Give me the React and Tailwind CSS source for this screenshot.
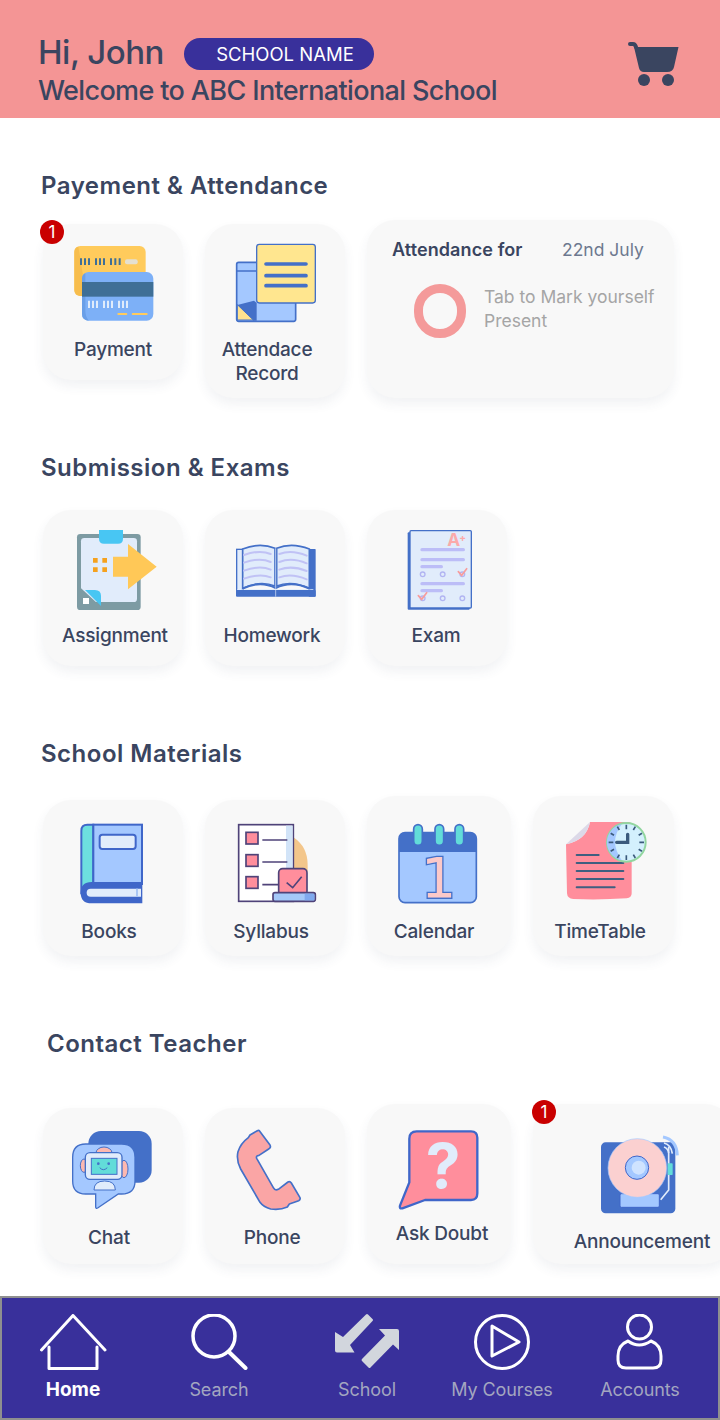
import React from 'react'

const BLUE = '#4470c8'
const PALE = '#e1ecfb'
const SKY = '#a4c8ff'
const PINK = '#ff8e9c'
const TEAL = '#62dcd9'

function Badge({ className }) {
  return (
    <span className={`absolute w-[24px] h-[24px] rounded-full bg-[#c90000] text-white text-[17px] leading-[24px] text-center ${className}`}>1</span>
  )
}

function Tile({ box, iconBox, labelBox, icon, label, badge }) {
  return (
    <div className={`relative shrink-0 flex flex-col items-start bg-[#f8f8f8] rounded-[28px] shadow-[0_6px_12px_rgba(60,70,100,0.07)] ${box}`}>
      {badge}
      <div className={`shrink-0 ${iconBox}`}>{icon}</div>
      <div className={`w-full text-center whitespace-pre-line text-[19px] leading-[24px] tracking-[-0.2px] font-medium text-[#3a4560] translate-y-[1px] ${labelBox}`}>{label}</div>
    </div>
  )
}

function Title({ className, children }) {
  return <h2 className={`h-[32px] text-[24px] leading-[32px] font-semibold tracking-[0.5px] text-[#3a4560] ${className}`}>{children}</h2>
}

function CardsIcon() {
  return (
    <svg width="82" height="77" viewBox="129 105 246 231">
      <rect x="133" y="108" width="214" height="150" rx="18" fill="#ffcb5c" />
      <path d="M133 126 V240 Q133 256 150 258 L158 258 V190 L145 110 Q133 112 133 126 Z" fill="#f7bd4d" />
      <g fill="#3f6f96">
        <path d="M150 145h6v20h-6zM162 145h6v20h-6zM174 145h6v20h-6zM195 145h6v20h-6zM207 145h6v20h-6zM219 145h6v20h-6zM240 145h6v20h-6zM253 145h6v20h-6zM266 145h6v20h-6z" />
      </g>
      <rect x="285" y="148" width="38" height="15" rx="6" fill="#e5e0d0" />
      <rect x="156" y="186" width="214" height="146" rx="20" fill="#7db0f7" />
      <path d="M156 206 V312 Q156 330 176 332 Q166 320 166 300 V190 Q156 194 156 206 Z" fill="#6a9fe8" />
      <rect x="156" y="216" width="214" height="44" fill="#3f6f96" />
      <g fill={PALE}>
        <path d="M174 272h6v22h-6zM186 272h6v22h-6zM198 272h6v22h-6zM219 272h6v22h-6zM231 272h6v22h-6zM243 272h6v22h-6zM264 272h6v22h-6zM276 272h6v22h-6zM288 272h6v22h-6z" />
      </g>
      <rect x="262" y="309" width="30" height="6" rx="3" fill="#ffcb5c" />
      <rect x="305" y="309" width="48" height="6" rx="3" fill="#ffcb5c" />
    </svg>
  )
}

function RecordIcon() {
  return (
    <svg width="82" height="80" viewBox="615 99 246 240">
      <rect x="620" y="157" width="177" height="177" rx="6" fill={SKY} stroke={BLUE} strokeWidth="5" />
      <path d="M620 183 H720" stroke={BLUE} strokeWidth="4" />
      <path d="M622 285 L672 272 L680 279 V332 H670 Z" fill={BLUE} />
      <path d="M622 284 V330 H670 Z" fill="#ffe28f" stroke={BLUE} strokeWidth="3" />
      <rect x="680" y="103" width="176" height="176" rx="8" fill="#ffe68f" stroke={BLUE} strokeWidth="4" />
      <g stroke={BLUE} strokeWidth="11" strokeLinecap="round">
        <path d="M708 162 H828M708 197 H828M708 227 H828" />
      </g>
    </svg>
  )
}

function AssignmentIcon() {
  return (
    <svg width="82" height="82" viewBox="138 87 246 246">
      <rect x="141" y="102" width="191" height="228" rx="10" fill="#7d9ba3" />
      <rect x="153" y="114" width="168" height="192" rx="10" fill={PALE} />
      <path d="M207 90 H279 V116 Q279 131 264 131 H222 Q207 131 207 116 Z" fill="#48c6f3" />
      <path d="M150 262 L213 320 V330 H150 Z" fill="#7d9ba3" />
      <path d="M165 270 H195 Q213 270 213 288 V318 Z" fill="#48c6f3" />
      <rect x="159" y="294" width="18" height="18" fill="#fff" />
      <path d="M189 174h14v14h-14zM217 174h14v14h-14zM189 202h14v14h-14zM217 202h14v14h-14z" fill="#f5a11e" />
      <path d="M249 170 H294 V132 L380 200 L294 268 V230 H249 Z" fill="#ffc857" />
    </svg>
  )
}

function HomeworkIcon() {
  return (
    <svg width="84" height="58" viewBox="612 120 252 174">
      <rect x="836" y="147" width="21" height="143" rx="2" fill={BLUE} />
      <rect x="620" y="148" width="20" height="130" fill={PALE} stroke={BLUE} strokeWidth="4" />
      <path d="M622 268 H850 V276 H622 Z" fill={PALE} />
      <rect x="618" y="270" width="239" height="20" rx="3" fill={BLUE} />
      <path d="M638 147 Q690 126 735 145 V258 Q690 240 638 265 Z" fill={PALE} stroke={BLUE} strokeWidth="5" />
      <path d="M740 145 Q785 126 838 147 V265 Q785 240 740 258 Z" fill={PALE} stroke={BLUE} strokeWidth="5" />
      <g fill="none" stroke="#c0c2f5" strokeWidth="6" strokeLinecap="round">
        <path d="M642 165 Q690 148 722 162M642 188 Q690 171 722 186M642 212 Q690 195 722 209M642 236 Q690 219 722 232" />
        <path d="M748 162 Q785 148 830 167M748 186 Q785 171 830 190M748 209 Q785 195 830 213M748 232 Q785 219 830 238" />
      </g>
      <path d="M638 266 Q690 240 737 264 Q785 240 838 266" fill="none" stroke={BLUE} strokeWidth="6" />
      <path d="M737 145 V290" stroke={PALE} strokeWidth="2" />
    </svg>
  )
}

function ExamIcon() {
  return (
    <svg width="67" height="82" viewBox="1128 87 201 246">
      <rect x="1133" y="97" width="186" height="232" fill={BLUE} rx="3" />
      <rect x="1140" y="92" width="184" height="232" rx="3" fill={PALE} stroke={BLUE} strokeWidth="4" />
      <text x="1252" y="137" fontFamily="Inter, sans-serif" fontWeight="700" fontSize="52" fill="#fbaaaa">A</text>
      <text x="1288" y="122" fontFamily="Inter, sans-serif" fontWeight="700" fontSize="30" fill="#fbaaaa">+</text>
      <g stroke="#bcbdf7" strokeWidth="10" strokeLinecap="round">
        <path d="M1176 149 H1300M1176 179 H1300M1176 200 H1234M1176 251 H1300M1176 272 H1234" />
      </g>
      <g fill="none" stroke="#b2b5f2" strokeWidth="4">
        <circle cx="1178" cy="223" r="7" />
        <circle cx="1238" cy="223" r="7" />
        <circle cx="1297" cy="223" r="7" />
        <circle cx="1178" cy="295" r="7" />
        <circle cx="1238" cy="295" r="7" />
        <circle cx="1297" cy="295" r="7" />
      </g>
      <g fill="none" stroke="#f79c9c" strokeWidth="5" strokeLinecap="round">
        <path d="M1285 215 L1295 226 L1310 206" />
        <path d="M1165 287 L1175 298 L1190 278" />
      </g>
    </svg>
  )
}

function BooksIcon() {
  return (
    <svg width="65" height="82" viewBox="147 99 195 246">
      <path d="M190 104 H172 Q154 104 154 122 V310 H190 Z" fill="#6ddfdf" stroke="#3f66c9" strokeWidth="6" />
      <rect x="190" y="104" width="146" height="178" fill={SKY} stroke="#3f66c9" strokeWidth="6" />
      <rect x="209" y="134" width="108" height="43" rx="8" fill={PALE} stroke="#3f66c9" strokeWidth="6" />
      <path d="M337 276 H185 Q152 276 152 308 Q152 340 185 340 H337 Z" fill="#3f66c9" />
      <path d="M333 296 H182 Q170 296 170 308 Q170 320 182 320 H333 Z" fill={PALE} />
      <rect x="318" y="296" width="6" height="24" fill="#a9c6f5" />
    </svg>
  )
}

function SyllabusIcon() {
  const ink = '#4f4379'
  return (
    <svg width="80" height="80" viewBox="621 99 240 240">
      <path d="M790 142 Q833 170 833 225 V245 H790 Z" fill="#f3c68b" />
      <rect x="626" y="104" width="164" height="230" fill="#fff" stroke={ink} strokeWidth="5" />
      <rect x="768" y="107" width="20" height="224" fill="#d2e4f8" />
      <g fill={PINK} stroke={ink} strokeWidth="5">
        <rect x="648" y="127" width="36" height="35" />
        <rect x="648" y="194" width="36" height="35" />
        <rect x="648" y="260" width="36" height="35" />
      </g>
      <path d="M697 150 H772M697 216 H772M697 284 H750" stroke={ink} strokeWidth="5" />
      <rect x="746" y="236" width="85" height="80" rx="12" fill={PINK} stroke={ink} strokeWidth="5" />
      <rect x="729" y="308" width="127" height="26" rx="6" fill="#a4c8f8" stroke={ink} strokeWidth="5" />
      <path d="M824 311 H848 Q853 311 853 316 V331 H824 Z" fill="#7fa9ee" />
      <path d="M770 278 L788 293 L815 260" fill="none" stroke={ink} strokeWidth="5" />
    </svg>
  )
}

function CalendarIcon() {
  return (
    <svg width="81" height="81" viewBox="111 99 243 243" className="overflow-visible">
      <rect x="117" y="128" width="232" height="210" rx="18" fill={SKY} stroke={BLUE} strokeWidth="5" />
      <path d="M135 128 H331 Q349 128 349 146 V186 H117 V146 Q117 128 135 128 Z" fill={BLUE} />
      <g fill={TEAL} stroke={BLUE} strokeWidth="5">
        <rect x="161" y="104" width="26" height="62" rx="13" />
        <rect x="225" y="104" width="26" height="62" rx="13" />
        <rect x="285" y="104" width="26" height="62" rx="13" />
      </g>
      <text x="236" y="321" textAnchor="middle" fontFamily="DejaVu Sans, sans-serif" fontSize="166" fill="#fcc9c9" stroke={BLUE} strokeWidth="8" paintOrder="stroke">1</text>
    </svg>
  )
}

function TimeTableIcon() {
  return (
    <svg width="84" height="81" viewBox="612 90 252 243">
      <path d="M690 96 H805 Q815 96 815 110 V310 Q815 324 800 325 Q720 330 640 327 Q622 326 621 310 L618 163 Q680 150 690 96 Z" fill={PINK} />
      <path d="M690 96 Q680 150 618 163 Z" fill="#dcd9e8" />
      <g stroke="#3f5f80" strokeWidth="6" strokeLinecap="round">
        <path d="M650 195 H716M650 219 H790M650 243 H790M650 267 H790M650 292 H764" />
      </g>
      <circle cx="799" cy="157" r="58" fill="#d3f0fd" stroke="#92d6a0" strokeWidth="6" />
      <path d="M785 103 A55 55 0 0 0 785 211 Q765 180 765 157 Q765 130 785 103 Z" fill={SKY} />
      <g stroke="#3a5a7c" strokeWidth="5">
        <path d="M799 104v14M799 196v14M746 157h14M838 157h14M772 110l6 10M826 110l-6 10M772 204l6-10M826 204l-6-10M752 130l10 6M846 130l-10 6M752 184l10-6M846 184l-10-6" />
      </g>
      <path d="M770 157 H803 V133" fill="none" stroke="#3a5a7c" strokeWidth="10" strokeLinecap="round" />
    </svg>
  )
}

function ChatIcon() {
  return (
    <svg width="82" height="80" viewBox="123 105 246 240">
      <rect x="175" y="108" width="190" height="155" rx="38" fill={BLUE} />
      <path d="M167 147 H275 Q315 147 315 187 V258 Q315 297 275 297 H265 L203 339 Q197 342 197 335 V297 H167 Q128 297 128 258 V187 Q128 147 167 147 Z" fill={SKY} stroke={BLUE} strokeWidth="4" />
      <ellipse cx="222" cy="174" rx="24" ry="18" fill="#fcb8b0" stroke={BLUE} strokeWidth="3" />
      <ellipse cx="162" cy="212" rx="11" ry="20" fill="#fcb8b0" stroke={BLUE} strokeWidth="3" />
      <ellipse cx="282" cy="222" rx="12" ry="26" fill="#fcb8b0" stroke={BLUE} strokeWidth="3" />
      <path d="M192 285 Q192 258 224 258 Q256 258 256 285 Z" fill={PALE} stroke={BLUE} strokeWidth="3" />
      <rect x="166" y="173" width="110" height="80" rx="14" fill={PALE} stroke={BLUE} strokeWidth="4" />
      <rect x="184" y="190" width="77" height="48" fill={TEAL} stroke={BLUE} strokeWidth="3" />
      <circle cx="205" cy="206" r="4" fill={BLUE} />
      <circle cx="236" cy="206" r="4" fill={BLUE} />
      <path d="M210 219 Q220 230 231 219" fill="none" stroke={BLUE} strokeWidth="3" strokeLinecap="round" />
    </svg>
  )
}

function PhoneIcon() {
  return (
    <svg width="67" height="82" viewBox="615 102 201 246">
      <path d="M688 107 L720 150 Q724 158 716 162 L687 181 Q677 182 680 190 L730 278 Q735 288 745 283 L774 261 Q780 258 784 264 L810 308 Q812 314 806 317 L778 327 L772 336 Q750 346 722 342 Q700 336 690 322 L632 222 Q618 195 624 170 Q632 145 655 128 L660 120 L682 107 Q686 105 688 107 Z" fill="#faa5a5" stroke={BLUE} strokeWidth="5" strokeLinejoin="round" />
    </svg>
  )
}

function DoubtIcon() {
  return (
    <svg width="82" height="82" viewBox="111 102 246 246" className="overflow-visible">
      <path d="M170 109 H333 Q352 109 352 128 V295 Q352 315 333 315 H195 L127 340 Q117 342 120 332 L148 262 V131 Q148 109 170 109 Z" fill={PINK} stroke="#3f66c9" strokeWidth="7" strokeLinejoin="round" />
      <text x="249" y="278" textAnchor="middle" fontFamily="Inter, sans-serif" fontWeight="700" fontSize="186" fill={PALE}>?</text>
    </svg>
  )
}

function AnnounceIcon() {
  return (
    <svg width="80" height="80" viewBox="720 120 240 240">
      <rect x="723" y="142" width="223" height="213" rx="14" fill={BLUE} />
      <rect x="780" y="296" width="118" height="41" rx="4" fill={SKY} stroke="#3f66c9" strokeWidth="3" />
      <circle cx="832" cy="219" r="88" fill="#fbd0d0" stroke={SKY} strokeWidth="2" />
      <circle cx="831" cy="218" r="35" fill={SKY} stroke="#3f66c9" strokeWidth="3" />
      <circle cx="836" cy="218" r="21" fill="#cfe3ff" />
      <path d="M926 155 V285 L902 314" fill="none" stroke={PALE} strokeWidth="5" />
      <rect x="923" y="205" width="15" height="35" rx="2" fill={TEAL} />
      <path d="M909 126 Q950 134 952 181" fill="none" stroke={SKY} strokeWidth="9" />
      <path d="M912 144 Q934 150 937 176" fill="none" stroke={PALE} strokeWidth="5" />
      <path d="M912 156 Q924 160 926 174" fill="none" stroke={PALE} strokeWidth="5" />
    </svg>
  )
}

function CartIcon() {
  return (
    <svg width="51" height="44" viewBox="628 42 51 44">
      <path d="M630 44 H633 Q635 44 636 47" fill="none" stroke="#3a4560" strokeWidth="4" strokeLinecap="round" />
      <path d="M634 47 H678.5 L674 67 Q673 72 667 72 H644 Q640 72 639 68 Z" fill="#3a4560" />
      <ellipse cx="644" cy="80" rx="6" ry="6" fill="#3a4560" />
      <ellipse cx="668" cy="80" rx="6" ry="6" fill="#3a4560" />
    </svg>
  )
}

const NAV_STROKE = { fill: 'none', stroke: '#fff', strokeWidth: 3, strokeLinecap: 'round', strokeLinejoin: 'round' }

function NavHome() {
  return (
    <svg width="68" height="56" viewBox="39 1314 68 56">
      <path d="M41.5 1350 L73 1315.5 L105 1350" {...NAV_STROKE} />
      <path d="M49 1347 V1368.5 H97 V1347" {...NAV_STROKE} />
    </svg>
  )
}

function NavSearch() {
  return (
    <svg width="58" height="56" viewBox="191 1314 58 56">
      <circle cx="215" cy="1336" r="21" {...NAV_STROKE} strokeWidth="3.5" />
      <path d="M230 1352 L246.5 1368" {...NAV_STROKE} strokeWidth="4" />
    </svg>
  )
}

function NavSchool() {
  return (
    <svg width="68" height="56" viewBox="332 1314 68 56">
      <path d="M334 1332 L342 1337 L365 1314.5 Q366 1313.5 367 1314.5 L371.5 1319 Q372.5 1320 371.5 1321 L349 1345 L353.5 1352.5 H336 Q334 1352.5 334 1350.5 Z" fill="#d2d6dd" />
      <path d="M378 1329 H396 Q398 1329 398 1331 V1350 L392 1344.5 L369.5 1367.5 Q368.5 1368.5 367.5 1367.5 L361 1361 Q360 1360 361 1359 L384 1335.5 Z" fill="#d2d6dd" />
    </svg>
  )
}

function NavPlay() {
  return (
    <svg width="58" height="56" viewBox="473 1314 58 56">
      <circle cx="502" cy="1342" r="26.5" {...NAV_STROKE} />
      <path d="M492 1326 L519 1342 L492 1356 Z" {...NAV_STROKE} />
    </svg>
  )
}

function NavAccount() {
  return (
    <svg width="48" height="56" viewBox="616 1314 48 56">
      <circle cx="639.5" cy="1327" r="12" {...NAV_STROKE} />
      <path d="M628 1341 Q639 1349 651 1341 Q661 1345 661 1356 V1360 Q661 1368 653 1368 H626 Q618 1368 618 1360 V1356 Q618 1345 628 1341 Z" {...NAV_STROKE} />
    </svg>
  )
}

function NavItem({ width, icon, label, active }) {
  return (
    <div className={`flex flex-col items-center shrink-0 ${width}`}>
      {icon}
      <span className={`mt-[8px] leading-[24px] whitespace-nowrap ${active ? 'text-[19px] font-bold text-white' : 'text-[18px] tracking-[-0.1px] text-[#a3a6c0]'}`}>{label}</span>
    </div>
  )
}

export default function App() {
  return (
    <div className="w-[720px] h-[1420px] overflow-hidden bg-white flex flex-col font-['Inter',sans-serif]">
      <header className="h-[118px] shrink-0 bg-[#f49595] pl-[38px] pr-[41px] flex justify-between items-start">
        <div className="pt-[33px]">
          <div className="flex items-start">
            <span className="text-[33px] leading-[38px] font-medium tracking-[-0.5px] text-[#3a4560]">Hi, John</span>
            <span className="ml-[20px] mt-[5px] w-[190px] h-[32px] rounded-[16px] bg-[#39309b] pl-[12px] text-white text-[18.5px] leading-[32px] text-center">SCHOOL NAME</span>
          </div>
          <div className="text-[27px] leading-[34px] font-medium tracking-[-0.63px] text-[#3a4560] mt-[3px]">Welcome to ABC International School</div>
        </div>
        <div className="pt-[42px]"><CartIcon /></div>
      </header>

      <Title className="ml-[41px] mt-[52px]">Payement &amp; Attendance</Title>
      <div className="flex items-start gap-[22px] pl-[43px] mt-[18px]">
        <Tile box="w-[140px] h-[156px] mt-[4px]" iconBox="ml-[30px] mt-[21px]" labelBox="mt-[15px]" icon={<CardsIcon />} label="Payment" badge={<Badge className="-left-[3px] -top-[4px]" />} />
        <Tile box="w-[140px] h-[174px] mt-[4px]" iconBox="ml-[30px] mt-[19px]" labelBox="mt-[14px] pr-[16px]" icon={<RecordIcon />} label={'Attendace\nRecord'} />
        <div className="w-[307px] h-[178px] bg-[#f8f8f8] rounded-[28px] shadow-[0_6px_12px_rgba(60,70,100,0.07)] pl-[25px] pt-[18px]">
          <div className="flex leading-[24px]">
            <span className="text-[18px] tracking-[0.1px] font-semibold text-[#3a4560] w-[170px]">Attendance for</span>
            <span className="text-[17.5px] text-[#6d788f]">22nd July</span>
          </div>
          <div className="flex items-start mt-[23px] pl-[22px]">
            <div className="w-[52px] h-[54px] -mt-[1px] rounded-full border-[9px] border-[#f49a9a] shrink-0" />
            <div className="ml-[18px] text-[17.5px] leading-[24px] text-[#a5a5a5]">Tab to Mark yourself<br />Present</div>
          </div>
        </div>
      </div>

      <Title className="ml-[41px] mt-[54px]">Submission &amp; Exams</Title>
      <div className="flex items-start gap-[22px] pl-[43px] mt-[26px]">
        <Tile box="w-[140px] h-[156px]" iconBox="ml-[33px] mt-[19px]" labelBox="mt-[12px] pl-[4px]" icon={<AssignmentIcon />} label="Assignment" />
        <Tile box="w-[140px] h-[156px]" iconBox="ml-[29px] mt-[30px]" labelBox="mt-[25px] pr-[6px]" icon={<HomeworkIcon />} label="Homework" />
        <Tile box="w-[140px] h-[156px]" iconBox="ml-[39px] mt-[19px]" labelBox="mt-[12px] pr-[2px]" icon={<ExamIcon />} label="Exam" />
      </div>

      <Title className="ml-[41px] mt-[72px]">School Materials</Title>
      <div className="flex items-start gap-[22px] pl-[43px] mt-[26px]">
        <Tile box="w-[140px] h-[156px] mt-[4px]" iconBox="ml-[36px] mt-[23px]" labelBox="mt-[14px] pr-[8px]" icon={<BooksIcon />} label="Books" />
        <Tile box="w-[140px] h-[156px] mt-[4px]" iconBox="ml-[32px] mt-[23px]" labelBox="mt-[16px] pr-[8px]" icon={<SyllabusIcon />} label="Syllabus" />
        <Tile box="w-[144px] h-[160px]" iconBox="ml-[30px] mt-[27px]" labelBox="mt-[15px] pr-[10px]" icon={<CalendarIcon />} label="Calendar" />
        <Tile box="w-[141px] h-[160px]" iconBox="ml-[31px] mt-[24px]" labelBox="mt-[18px] pr-[7px]" icon={<TimeTableIcon />} label="TimeTable" />
      </div>

      <Title className="ml-[47px] mt-[72px]">Contact Teacher</Title>
      <div className="flex items-start gap-[22px] pl-[43px] mt-[44px]">
        <Tile box="w-[140px] h-[156px] mt-[4px]" iconBox="ml-[28px] mt-[22px]" labelBox="mt-[15px] pr-[8px]" icon={<ChatIcon />} label="Chat" />
        <Tile box="w-[140px] h-[156px] mt-[4px]" iconBox="ml-[30px] mt-[21px]" labelBox="mt-[14px] pr-[6px]" icon={<PhoneIcon />} label="Phone" />
        <Tile box="w-[144px] h-[160px]" iconBox="ml-[30px] mt-[25px]" labelBox="mt-[10px] pl-[6px]" icon={<DoubtIcon />} label="Ask Doubt" />
        <Tile box="w-[200px] h-[160px]" iconBox="ml-[67px] mt-[31px]" labelBox="mt-[14px] pl-[18px]" icon={<AnnounceIcon />} label="Announcement" badge={<Badge className="-left-[1px] -top-[4px]" />} />
      </div>

      <nav className="mt-auto h-[124px] shrink-0 bg-[#39309b] border-2 border-[#8f8f8f] pt-[16px] flex">
        <NavItem width="w-[142px]" icon={<NavHome />} label="Home" active />
        <NavItem width="w-[150px]" icon={<NavSearch />} label="Search" />
        <NavItem width="w-[146px]" icon={<NavSchool />} label="School" />
        <NavItem width="w-[124px]" icon={<NavPlay />} label="My Courses" />
        <NavItem width="w-[152px]" icon={<NavAccount />} label="Accounts" />
      </nav>
    </div>
  )
}
